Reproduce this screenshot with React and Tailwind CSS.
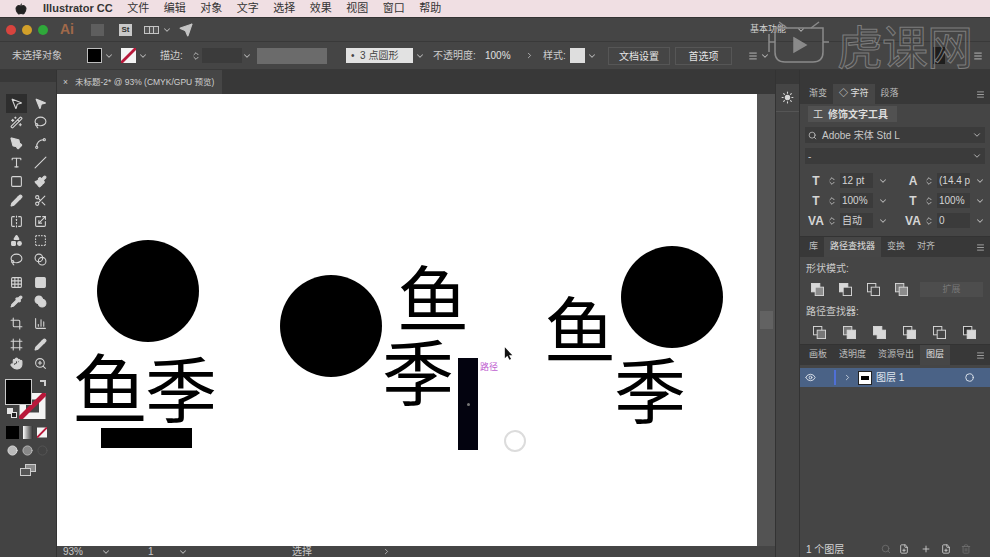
import {
  Apple, ChevronDown, ChevronRight, ChevronsUpDown, Send, Eye, Circle, Menu, Search, Plus, Trash2, FilePlus,
  MousePointer2, Wand2, Lasso, PenTool, Spline, Type, Slash, Square, Paintbrush, Pencil, Scissors,
  FlipHorizontal, Scaling, Shapes, BoxSelect, Grid3x3, Pipette, Blend, ChartColumn, Hand, ZoomIn, Crop, Frame, Sun,
} from "lucide-react";

const cjk = "font-['Liberation_Sans','Noto_Sans_CJK_SC',sans-serif]";

// [left icon, right icon, top margin, fill left, fill right]
const tools = [
  [MousePointer2, MousePointer2, "mt-0", false, true],
  [Wand2, Lasso, "mt-0", false, false],
  [PenTool, Spline, "mt-[2px]", true, false],
  [Type, Slash, "mt-0", false, false],
  [Square, Paintbrush, "mt-0", false, true],
  [Pencil, Scissors, "mt-0", true, false],
  [FlipHorizontal, Scaling, "mt-[2px]", false, false],
  [Shapes, BoxSelect, "mt-0", true, false],
  [Lasso, Blend, "mt-0", false, false],
  [Grid3x3, Square, "mt-[4px]", false, true],
  [Pipette, Blend, "mt-0", true, true],
  [Crop, ChartColumn, "mt-[3px]", false, false],
  [Frame, Pencil, "mt-[2px]", false, true],
  [Hand, ZoomIn, "mt-0", true, false],
];

const Chev = ({ className = "" }) => <ChevronDown size={10} strokeWidth={2.5} className={`text-[#b5b5b5] shrink-0 ${className}`} />;

const Swatch = ({ className = "", hole = false }) => (
  <svg viewBox="0 0 16 16" className={className}>
    <rect width="16" height="16" fill="#f4f4f4" />
    {hole && <rect x="4" y="4" width="8" height="8" fill="#454545" />}
    <line x1="0" y1="16" x2="16" y2="0" stroke="#b8183a" strokeWidth="3" />
  </svg>
);

const MenuBar = () => (
  <div className={`h-[17px] bg-[#f0dfe3] flex items-center text-[#333] text-[11px] ${cjk}`}>
    <Apple size={12} fill="#222" className="ml-[15px] text-[#222]" />
    <span className="ml-[16px] font-bold">Illustrator CC</span>
    {["文件", "编辑", "对象", "文字", "选择", "效果", "视图", "窗口", "帮助"].map((m) => (
      <span key={m} className="ml-[14.5px] first-of-type:ml-[15px] w-[22px] whitespace-nowrap">{m}</span>
    ))}
  </div>
);

const AppBar = () => (
  <div className="h-[24px] bg-[#454545] flex items-center border-t border-[#333]">
    <span className="ml-[6px] w-[10px] h-[10px] rounded-full bg-[#d8443e]" />
    <span className="ml-[6px] w-[10px] h-[10px] rounded-full bg-[#d2a02a]" />
    <span className="ml-[6px] w-[10px] h-[10px] rounded-full bg-[#2fa83a]" />
    <span className={`ml-[12px] text-[14px] font-bold text-[#a0694a] ${cjk}`}>Ai</span>
    <span className="ml-[17px] w-[13px] h-[12px] bg-[#5e5e5e]" />
    <span className={`ml-[15px] w-[13px] h-[12px] bg-[#c9c9c9] text-[8px] leading-[12px] text-center text-[#333] font-bold ${cjk}`}>St</span>
    <span className="ml-[12px] w-[15px] h-[8px] bg-[#c4c4c4] grid grid-cols-3 gap-[1px] border border-[#c4c4c4]">
      <span className="bg-[#555]" /><span className="bg-[#555]" /><span className="bg-[#555]" />
    </span>
    <Chev className="ml-[3px]" />
    <Send size={14} fill="#c4c4c4" className="ml-[7px] text-[#c4c4c4]" />
    <span className={`ml-[557px] text-[9px] text-[#cfcfcf] whitespace-nowrap ${cjk}`}>基本功能</span>
    <Chev className="ml-[10px]" />
  </div>
);

const ControlBar = () => (
  <div className={`h-[29px] bg-[#454545] flex items-center text-[10px] text-[#cdcdcd] border-y border-[#393939] whitespace-nowrap ${cjk}`}>
    <span className="ml-[12px] w-[75px]">未选择对象</span>
    <span className="w-[15px] h-[15px] bg-black border border-[#bdbdbd]" />
    <Chev className="ml-[2px]" />
    <Swatch className="ml-[7px] w-[15px] h-[15px]" />
    <Chev className="ml-[2px]" />
    <span className="ml-[12px] w-[26px]">描边:</span>
    <ChevronsUpDown size={10} className="ml-[5px]" />
    <span className="ml-[1px] w-[40px] h-[15px] bg-[#3b3b3b]" />
    <Chev className="ml-[0px]" />
    <span className="ml-[5px] w-[70px] h-[16px] bg-[#6b6b6b]" />
    <span className="ml-[19px] w-[67px] h-[15px] bg-[#e2e2e2] text-[#444] flex items-center pl-[5px]">•&nbsp;&nbsp;3 点圆形</span>
    <Chev className="ml-[2px]" />
    <span className="ml-[8px] w-[52px]">不透明度:</span>
    <span className="w-[40px] text-[#e0e0e0]">100%</span>
    <ChevronRight size={9} />
    <span className="ml-[9px] w-[27px]">样式:</span>
    <span className="w-[15px] h-[15px] bg-[#dedede]" />
    <Chev className="ml-[2px]" />
    <span className="ml-[11px] w-[62px] h-[18px] leading-[17px] text-center border border-[#565656] text-[#e4e4e4]">文档设置</span>
    <span className="ml-[5px] w-[57px] h-[18px] leading-[17px] text-center border border-[#565656] text-[#e4e4e4]">首选项</span>
    <Menu size={10} className="ml-[16px]" />
    <Chev className="ml-[2px]" />
    <span className="ml-[163px] w-[12px] h-[17px] bg-[#1e1e1e]" />
    <Menu size={10} className="ml-[28px]" />
  </div>
);

const ToolBar = () => (
  <div className="w-[57px] shrink-0 bg-[#434343] border-r border-[#333] flex flex-col">
    <div className="h-[12px] bg-[#383838] mb-[12px]" />
    <div className="flex flex-col pl-[6px]">
      {tools.map(([A, B, mt, fillA, fillB], i) => (
        <div key={i} className={`flex h-[19px] items-center ${mt}`}>
          <span className={`w-[21px] h-[19px] flex items-center justify-center ${i === 0 ? "bg-[#2e2e2e]" : ""}`}>
            <A size={13} strokeWidth={2} fill={fillA ? "#d5d5d5" : "none"} className="text-[#d5d5d5]" />
          </span>
          <span className="ml-[3px] w-[21px] flex items-center justify-center">
            <B size={13} strokeWidth={2} fill={fillB ? "#d5d5d5" : "none"} className="text-[#d5d5d5]" />
          </span>
        </div>
      ))}
    </div>
    <div className="relative h-[42px] mt-[6px] ml-[5px]">
      <Swatch hole className="absolute left-[14px] top-[14px] w-[27px] h-[26px]" />
      <span className="absolute left-0 top-0 w-[27px] h-[26px] bg-black border border-[#c9c9c9]" />
      <span className="absolute left-[35px] top-[1px] w-[6px] h-[6px] border-t-2 border-r-2 border-[#cfcfcf]" />
      <span className="absolute left-[2px] top-[29px] w-[6px] h-[6px] bg-[#e5e5e5]" />
      <span className="absolute left-[6px] top-[33px] w-[6px] h-[6px] bg-[#222] border border-[#e5e5e5]" />
    </div>
    <div className="flex items-center mt-[5px] ml-[6px]">
      <span className="w-[13px] h-[13px] bg-black" />
      <span className="ml-[4px] w-[10px] h-[13px] bg-gradient-to-r from-white to-[#333]" />
      <Swatch className="ml-[4px] w-[10px] h-[13px]" />
    </div>
    <div className="flex items-center mt-[6px] ml-[7px] gap-[4px]">
      <Circle size={11} fill="#bbb" className="text-[#ddd]" />
      <Circle size={11} fill="#888" className="text-[#bbb]" />
      <Circle size={11} className="text-[#555]" />
    </div>
    <div className="relative ml-[20px] mt-[8px] w-[16px] h-[12px]">
      <span className="absolute right-0 top-0 w-[11px] h-[8px] bg-[#8a8a8a] border border-[#ccc]" />
      <span className="absolute left-0 bottom-0 w-[11px] h-[8px] bg-[#555] border border-[#ccc]" />
    </div>
  </div>
);

const Glyph = ({ className, children }) => (
  <span className={`absolute leading-none text-black font-normal font-['Noto_Sans_CJK_SC',sans-serif] ${className}`}>{children}</span>
);

const Dot = ({ className }) => <span className={`absolute w-[102px] h-[102px] rounded-full bg-black ${className}`} />;

const Artboard = () => (
  <div className="relative flex-1 bg-white overflow-hidden">
    <Dot className="left-[40px] top-[146px]" />
    <Glyph className="left-[15px] top-[253px] text-[76px]">鱼</Glyph>
    <Glyph className="left-[88px] top-[256px] text-[72px]">季</Glyph>
    <span className="absolute left-[44px] top-[334px] w-[91px] h-[20px] bg-black" />

    <Dot className="left-[223px] top-[181px]" />
    <Glyph className="left-[340px] top-[165px] text-[72px]">鱼</Glyph>
    <Glyph className="left-[325px] top-[239px] text-[72px]">季</Glyph>
    <span className="absolute left-[401px] top-[264px] w-[20px] h-[92px] bg-[#03030f] flex items-center justify-center">
      <span className="w-[3px] h-[3px] rounded-full bg-[#777]" />
    </span>
    <span className={`absolute left-[423px] top-[268px] text-[9px] leading-[11px] whitespace-nowrap text-[#c060d0] ${cjk}`}>路径</span>
    <svg viewBox="0 0 12 16" className="absolute left-[447px] top-[253px] w-[10px] h-[14px]">
      <path d="M1 0 L1 13 L4 10 L6.5 15 L8.5 14 L6 9.5 L10 9.5 Z" fill="#111" />
    </svg>
    <span className="absolute left-[447px] top-[336px] w-[22px] h-[22px] rounded-full border-2 border-[#dcdcdc]" />

    <Dot className="left-[564px] top-[152px]" />
    <Glyph className="left-[487px] top-[196px] text-[72px]">鱼</Glyph>
    <Glyph className="left-[557px] top-[257px] text-[72px]">季</Glyph>
  </div>
);

const StatusBar = () => (
  <div className={`h-[11px] bg-[#454545] flex items-center text-[10px] leading-none text-[#c9c9c9] overflow-hidden ${cjk}`}>
    <span className="ml-[6px] w-[30px]">93%</span>
    <Chev className="ml-[8px]" />
    <span className="ml-[37px] w-[12px]">1</span>
    <Chev className="ml-[18px]" />
    <span className="ml-[104px]">选择</span>
    <ChevronRight size={9} className="ml-[70px]" />
  </div>
);

const Center = () => (
  <div className="flex-1 flex flex-col min-w-0">
    <div className="h-[24px] bg-[#383838] flex">
      <div className={`w-[165px] bg-[#464646] flex items-center text-[8.5px] text-[#cfcfcf] whitespace-nowrap ${cjk}`}>
        <span className="ml-[6px] mr-[7px]">×</span>未标题-2* @ 93% (CMYK/GPU 预览)
      </div>
    </div>
    <div className="flex-1 flex bg-[#545454]">
      <Artboard />
      <div className="w-[18px] bg-[#535353] flex justify-center items-center">
        <span className="w-[13px] h-[18px] bg-[#626262]" />
      </div>
    </div>
    <StatusBar />
  </div>
);

const Tabs = ({ items, active, className = "" }) => (
  <div className={`h-[20px] bg-[#383838] flex items-stretch text-[9px] text-[#bdbdbd] whitespace-nowrap ${className}`}>
    {items.map((t, i) => (
      <span key={t} className={`px-[6px] flex items-center ${i === active ? "bg-[#464646] text-[#e0e0e0]" : ""}`}>{t}</span>
    ))}
    <Menu size={9} className="ml-auto mr-[5px] self-center" />
  </div>
);

const Metric = ({ label, value }) => (
  <div className="flex items-center w-[80px] h-[15px]">
    <span className="w-[16px] text-[12px] leading-none font-bold text-[#d5d5d5] text-center whitespace-nowrap">{label}</span>
    <ChevronsUpDown size={10} className="ml-[3px] shrink-0" />
    <span className="ml-[3px] w-[33px] h-[15px] bg-[#3b3b3b] text-[10px] text-[#d5d5d5] leading-[15px] pl-[2px] whitespace-nowrap overflow-hidden">{value}</span>
    <Chev className="ml-[5px]" />
  </div>
);

const Pf = ({ a = "#d8d8d8", b = "#8c8c8c" }) => (
  <svg viewBox="0 0 14 14" className="w-[13px] h-[13px]">
    <rect x="0.5" y="0.5" width="9" height="9" fill={a} stroke="#d8d8d8" />
    <rect x="4.5" y="4.5" width="9" height="9" fill={b} stroke="#d8d8d8" />
  </svg>
);

const RightPanels = () => (
  <div className={`w-[190px] shrink-0 bg-[#454545] flex flex-col text-[#c9c9c9] ${cjk}`}>
    <div className="h-[14px] bg-[#383838]" />
    <Tabs items={["渐变", "◇ 字符", "段落"]} active={1} className="pl-[3px]" />
    <div className="h-[133px] px-[8px] pt-[2px] border-b border-[#333] text-[10px]">
      <div className="flex items-center w-[89px] h-[16px] bg-[#515151] text-[10px] text-[#dedede] font-bold whitespace-nowrap">
        <span className="mx-[5px] font-normal">工</span>修饰文字工具
      </div>
      <div className="mt-[5px] -mx-[3px] h-[16px] bg-[#3b3b3b] flex items-center pl-[3px] text-[10px] whitespace-nowrap">
        <Search size={9} className="mr-[5px]" />Adobe 宋体 Std L<ChevronDown size={10} className="ml-auto mr-[3px]" />
      </div>
      <div className="mt-[5px] -mx-[3px] h-[16px] bg-[#3b3b3b] flex items-center pl-[3px]">
        -<ChevronDown size={10} className="ml-auto mr-[3px]" />
      </div>
      <div className="mt-[9px] -mr-[3px] flex flex-col gap-[5px]">
        <div className="flex justify-between"><Metric label="T" value="12 pt" /><Metric label="A" value="(14.4 p" /></div>
        <div className="flex justify-between"><Metric label="T" value="100%" /><Metric label="T" value="100%" /></div>
        <div className="flex justify-between"><Metric label="VA" value="自动" /><Metric label="VA" value="0" /></div>
      </div>
    </div>
    <Tabs items={["库", "路径查找器", "变换", "对齐"]} active={1} className="pl-[3px]" />
    <div className="h-[88px] pl-[6px] pt-[4px] text-[10px] border-b border-[#333]">
      <div>形状模式:</div>
      <div className="flex items-center gap-[15px] mt-[6px] ml-[5px] h-[15px]">
        <Pf /><Pf b="#454545" /><Pf a="#454545" b="#454545" /><Pf a="#777" />
        <span className="-ml-[3px] w-[63px] h-[15px] bg-[#4d4d4d] text-center text-[#777] text-[9px] leading-[15px]">扩展</span>
      </div>
      <div className="mt-[7px]">路径查找器:</div>
      <div className="flex items-center gap-[17px] mt-[6px] ml-[7px] h-[15px]">
        <Pf a="#454545" b="#777" /><Pf a="#777" b="#d8d8d8" /><Pf b="#d8d8d8" /><Pf a="#454545" b="#d8d8d8" /><Pf a="#454545" b="#454545" /><Pf a="#333" b="#d8d8d8" />
      </div>
    </div>
    <Tabs items={["画板", "透明度", "资源导出", "图层"]} active={3} className="pl-[3px]" />
    <div className="h-[19px] mt-[3px] bg-[#4a6286] flex items-center text-[10px] text-[#dfe5ee]">
      <Eye size={11} className="ml-[5px]" />
      <span className="ml-[18px] w-[2px] h-[15px] bg-[#4f6fd6]" />
      <ChevronRight size={9} className="ml-[7px]" />
      <span className="ml-[6px] w-[14px] h-[14px] bg-white border border-[#222] flex items-center justify-center">
        <span className="w-[8px] h-[4px] bg-black" />
      </span>
      <span className="ml-[4px]">图层 1</span>
      <Circle size={9} strokeWidth={2.5} className="ml-auto mr-[16px]" />
    </div>
    <div className="flex-1" />
    <div className="h-[16px] flex items-center text-[10px] text-[#d5d5d5] whitespace-nowrap">
      <span className="ml-[6px]">1 个图层</span>
      <Search size={10} className="ml-[37px] text-[#707070]" />
      <FilePlus size={10} className="ml-[8px]" />
      <Plus size={10} className="ml-[12px]" />
      <FilePlus size={10} className="ml-[10px]" />
      <Trash2 size={10} className="ml-[10px] text-[#707070]" />
    </div>
  </div>
);

const Watermark = () => (
  <div className="absolute left-[767px] top-[20px] flex items-center pointer-events-none">
    <svg viewBox="0 0 64 48" className="w-[64px] h-[48px]" fill="none" stroke="#8a8a8a" strokeWidth="1.5">
      <path d="M8 8 H56 V32 Q56 42 46 42 H18 Q8 42 8 32 Z" />
      <path d="M2 14 V32 M12 2 L20 8 M52 2 L44 8 M2 22 H8 M56 22 H62" />
      <path d="M27 18 L39 25 L27 32 Z" fill="#8a8a8a" />
    </svg>
    <span className="ml-[6px] text-[46px] leading-none tracking-[-1px] text-transparent [-webkit-text-stroke:1px_#7d7d7d] font-['Noto_Sans_CJK_SC',sans-serif] whitespace-nowrap">虎课网</span>
  </div>
);

const App = () => (
  <div className="relative w-[990px] h-[557px] overflow-hidden flex flex-col bg-[#454545]">
    <MenuBar />
    <AppBar />
    <ControlBar />
    <div className="flex-1 flex min-h-0">
      <ToolBar />
      <Center />
      <div className="w-[25px] shrink-0 bg-[#454545] border-x border-[#333] flex flex-col">
        <div className="h-[14px] bg-[#383838]" />
        <div className="h-[28px] flex items-center justify-center border-b border-[#555]">
          <Sun size={13} fill="#d8d8d8" className="text-[#d8d8d8]" />
        </div>
      </div>
      <RightPanels />
    </div>
    <Watermark />
  </div>
);

export default App;
